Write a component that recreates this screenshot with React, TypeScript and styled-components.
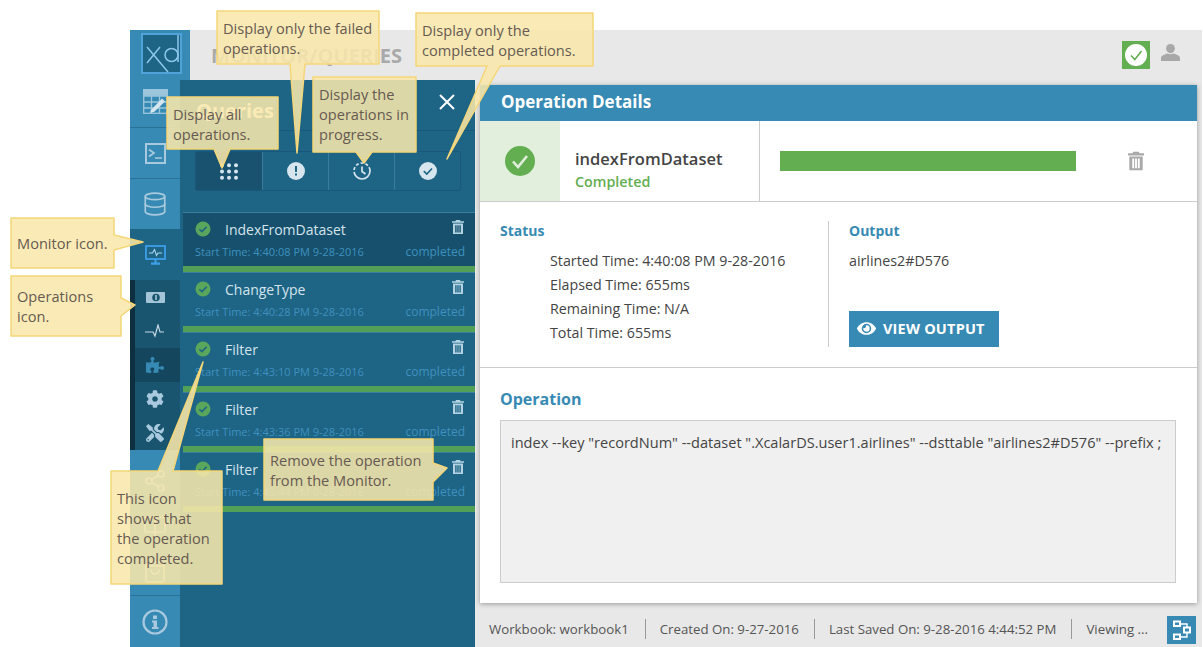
import React from "react";
import styled, { createGlobalStyle } from "styled-components";
import { Database, Share2, BookOpen, ShoppingBag } from "lucide-react";
import { FaPuzzlePiece, FaCog, FaTools, FaEye } from "react-icons/fa";

const GlobalStyle = createGlobalStyle`
  html, body {
    margin: 0;
    height: 647px;
    overflow: hidden;
    background: #fff;
    font-family: "Open Sans", "Noto Sans", sans-serif;
  }
  * { box-sizing: border-box; }
`;

const BLUE = "#378ab3";
const DEEP = "#1e6485";
const GREEN = "#64ae52";

const SPage = styled.div`
  position: relative;
  width: 1203px;
  height: 647px;
  padding: 30px 1px 0 130px;
  display: flex;
  flex-direction: column;
`;

const STopBar = styled.header`
  height: 50px;
  flex: none;
  display: flex;
  align-items: center;
  background: #e8e8e8;
  padding-right: 22px;
`;

const SLogoBlock = styled.div`
  width: 60px;
  height: 50px;
  flex: none;
  background: ${BLUE};
  padding: 3px 8px 6px 11px;
`;

const STitle = styled.h1`
  margin: 0 0 0 21px;
  font-size: 20px;
  font-weight: 700;
  color: #a9a9a9;
  flex: 1;
`;

const SHealth = styled.div`
  width: 28px;
  height: 28px;
  background: ${GREEN};
  display: flex;
  align-items: center;
  justify-content: center;
  margin-right: 11px;
`;

const SUser = styled.div`
  display: flex;
  margin-bottom: 5px;
`;

const SBody = styled.div`
  flex: 1;
  display: flex;
  min-height: 0;
`;

const SSidebar = styled.nav`
  width: 50px;
  flex: none;
  display: flex;
  flex-direction: column;
  background: ${BLUE};
`;

const SNavItem = styled.div<{ $h: number; $bg?: string; $line?: boolean; $strip?: boolean; $color?: string; $lift?: number }>`
  height: ${(p) => p.$h}px;
  flex: none;
  display: flex;
  align-items: center;
  justify-content: center;
  padding-bottom: ${(p) => p.$lift || 0}px;
  padding-right: ${(p) => (p.$strip ? 5 : 0)}px;
  background: ${(p) => p.$bg || "transparent"};
  border-bottom: ${(p) => (p.$line ? "1px solid #2a7198" : "0")};
  border-left: ${(p) => (p.$strip ? "5px solid #0e2f40" : "0")};
  color: ${(p) => p.$color || "#a9cade"};
  font-size: 18px;
`;

const SNavSpacer = styled.div`
  flex: 1;
  display: flex;
  flex-direction: column;
  align-items: center;
  justify-content: space-around;
  padding: 8px 0 0;
  color: #b3d3e3;
  border-bottom: 1px solid #2a7198;
`;

const SPanel = styled.section`
  width: 295px;
  flex: none;
  background: ${DEEP};
  display: flex;
  flex-direction: column;
  padding-left: 3px;
`;

const SPanelHead = styled.div`
  height: 51px;
  flex: none;
  display: flex;
  align-items: center;
  justify-content: space-between;
  padding: 0 20px 0 13px;
  border-bottom: 1px solid #19587a;
  margin-left: -3px;
  color: #fff;
`;

const SPanelTitle = styled.h2`
  margin: 10px 0 0 3px;
  font-size: 20px;
  font-weight: 700;
`;

const SClose = styled.div`
  display: flex;
  margin-bottom: 6px;
`;

const SFilterBar = styled.div`
  display: grid;
  grid-template-columns: repeat(4, 1fr);
  width: 266px;
  height: 40px;
  margin: 20px 0 21px 12px;
  border: 1px solid #19587a;
  border-radius: 3px;
  flex: none;
`;

const SFilterTab = styled.div<{ $active?: boolean }>`
  display: flex;
  align-items: center;
  justify-content: center;
  background: ${(p) => (p.$active ? "#18526f" : "transparent")};
  border-left: ${(p) => (p.$active ? "0" : "1px solid #3a7c9d")};
`;

const SRow = styled.div<{ $active?: boolean }>`
  height: 60px;
  flex: none;
  display: grid;
  grid-template-columns: 1fr auto;
  grid-template-rows: 32px 13px;
  align-items: center;
  padding: 0 10px 0 12px;
  background: ${(p) => (p.$active ? "#16506c" : "transparent")};
  border-top: 1px solid #3d7d9e;
  border-bottom: 6px solid #529f58;
`;

const SRowName = styled.div`
  display: flex;
  align-items: center;
  gap: 14px;
  font-size: 14px;
  color: #d4e4ec;
`;

const SRowTrash = styled.div`
  justify-self: end;
  display: flex;
  margin: 0 1px 4px 0;
`;

const SRowTime = styled.div`
  font-size: 11px;
  color: #3f90bf;
`;

const SRowState = styled.div`
  font-size: 12px;
  color: #3f90bf;
  justify-self: end;
`;

const SMain = styled.main`
  flex: 1;
  min-width: 0;
  background: #e8e8e8;
  display: flex;
  flex-direction: column;
  padding: 5px 5px 0 5px;
`;

const SCard = styled.div`
  height: 518px;
  flex: none;
  background: #fff;
  box-shadow: 0 1px 5px rgba(0, 0, 0, 0.35);
  display: flex;
  flex-direction: column;
`;

const SCardHead = styled.div`
  height: 36px;
  flex: none;
  background: ${BLUE};
  color: #fff;
  font-size: 17px;
  font-weight: 700;
  padding-left: 21px;
  line-height: 33px;
`;

const SSummary = styled.div`
  height: 81px;
  flex: none;
  display: flex;
  border-bottom: 1px solid #ccc;
`;

const SSummaryIcon = styled.div`
  width: 80px;
  background: #e1efdc;
  display: flex;
  align-items: center;
  justify-content: center;
`;

const SSummaryName = styled.div`
  width: 200px;
  padding: 26px 0 0 15px;
  border-right: 1px solid #ccc;
  white-space: nowrap;
`;

const SOpName = styled.div`
  font-size: 16.5px;
  font-weight: 600;
  color: #444;
  line-height: 24px;
`;

const SOpState = styled.div`
  font-size: 14.3px;
  font-weight: 600;
  color: ${GREEN};
  line-height: 22px;
`;

const SProgressWrap = styled.div`
  flex: 1;
  display: flex;
  align-items: center;
  padding-left: 20px;
`;

const SProgress = styled.div`
  width: 296px;
  height: 20px;
  background: ${GREEN};
  margin-right: 52px;
`;

const SInfo = styled.div`
  height: 166px;
  flex: none;
  display: flex;
  padding: 19px 0 20px 20px;
  border-bottom: 1px solid #ccc;
`;

const SStatus = styled.div`
  width: 329px;
  border-right: 1px solid #ccc;
`;

const SOutput = styled.div`
  padding-left: 20px;
`;

const SLabel = styled.h3`
  margin: 0;
  font-size: 14px;
  font-weight: 700;
  color: ${BLUE};
  line-height: 20px;
`;

const SStatusList = styled.div`
  margin: 8px 0 0 50px;
`;

const SLine = styled.div`
  font-size: 14.25px;
  color: #444;
  line-height: 24px;
`;

const SOutName = styled(SLine)`
  margin: 8px 0 38px;
`;

const SViewButton = styled.button`
  width: 150px;
  height: 36px;
  border: 0;
  background: ${BLUE};
  color: #fff;
  font: 700 14.5px "Open Sans", sans-serif;
  letter-spacing: 0.2px;
  display: flex;
  align-items: center;
  gap: 7px;
  padding: 0 0 2px 8px;
`;

const SOperation = styled.div`
  flex: 1;
  display: flex;
  flex-direction: column;
  padding: 20px 21px 20px 20px;
`;

const SOpTitle = styled.h3`
  margin: 0 0 9px;
  font-size: 16px;
  font-weight: 700;
  color: ${BLUE};
  line-height: 23px;
`;

const SCodeBox = styled.div`
  flex: 1;
  background: #f0f0f0;
  border: 1px solid #ccc;
  padding: 11px 10px;
  font-size: 14.55px;
  line-height: 20px;
  color: #444;
  white-space: nowrap;
`;

const SFooter = styled.footer`
  flex: 1;
  display: flex;
  align-items: center;
  padding: 0 1px 0 4px;
  font-size: 13.25px;
  color: #555;
`;

const SFootItem = styled.div`
  padding: 0 15px 0 14px;
  line-height: 20px;
  border-right: 1px solid #999;
  margin-top: 7px;
  white-space: nowrap;
  &:first-child {
    padding: 0 16px 0 5px;
  }
  &:nth-last-child(2) {
    border-right: 0;
    flex: 1;
  }
`;

const SFootButton = styled.div`
  width: 29px;
  height: 28px;
  flex: none;
  background: ${BLUE};
  display: flex;
  align-items: center;
  justify-content: center;
  margin-top: 9px;
`;

// yellow help balloons that sit over the screenshot
const SCallout = styled.div<{ $x: number; $y: number; $w: number; $h: number; $pad: number; $padX: number }>`
  position: absolute;
  left: ${(p) => p.$x}px;
  top: ${(p) => p.$y}px;
  width: ${(p) => p.$w}px;
  height: ${(p) => p.$h}px;
  padding: ${(p) => p.$pad}px 0 0 ${(p) => p.$padX}px;
  font-size: 14.6px;
  line-height: 20px;
  color: #665a52;
`;

const SCalloutShape = styled.svg`
  position: absolute;
  inset: 0;
  width: 100%;
  height: 100%;
  overflow: visible;
`;

const SCalloutText = styled.div`
  position: relative;
  white-space: pre-line;
`;

type CalloutProps = {
  x: number;
  y: number;
  w: number;
  h: number;
  side: "top" | "bottom" | "right";
  a: number;
  b: number;
  tip: [number, number];
  pad?: number;
  padX?: number;
  text: string;
};

const Callout = ({ x, y, w, h, side, a, b, tip, pad = 7, padX = 6, text }: CalloutProps) => {
  const tx = tip[0] - x;
  const ty = tip[1] - y;
  let d = "";
  if (side === "top") d = `M0 0H${a - x}L${tx} ${ty}L${b - x} 0H${w}V${h}H0Z`;
  if (side === "bottom") d = `M0 0H${w}V${h}H${b - x}L${tx} ${ty}L${a - x} ${h}H0Z`;
  if (side === "right") d = `M0 0H${w}V${a - y}L${tx} ${ty}L${w} ${b - y}V${h}H0Z`;
  return (
    <SCallout $x={x} $y={y} $w={w} $h={h} $pad={pad} $padX={padX}>
      <SCalloutShape>
        <path
          d={d}
          fill="#f9e8ab"
          fillOpacity={0.87}
          stroke="#f5d678"
          strokeWidth={1.5}
          strokeLinejoin="round"
        />
      </SCalloutShape>
      <SCalloutText>{text}</SCalloutText>
    </SCallout>
  );
};

const Logo = () => (
  <svg width="41" height="41" viewBox="0 0 41 41">
    <rect x="1" y="1" width="39" height="39" fill={DEEP} stroke="#4fa3d8" strokeWidth="2" />
    <g fill="none" stroke="#8cc8ec" strokeWidth="1.5">
      <path d="M6 14L27 39M19 14L6 30" />
      <circle cx="30.5" cy="22" r="6.5" />
      <path d="M37 2V29" />
    </g>
  </svg>
);

const TableIcon = () => (
  <svg width="25" height="25" viewBox="0 0 25 25" fill="none" stroke="#9cc6dc" strokeWidth="1.3">
    <rect x="0.7" y="0.7" width="23.6" height="23.6" />
    <path d="M1 7H24M1 13H24M1 19H24M8.5 7V24M16.5 7V24" />
    <rect x="0.7" y="0.7" width="23.6" height="5.5" fill="#9cc6dc" />
    <path d="M8 21L19 9.5L22 12.5L11 23L7 23.8Z" fill="#d5e6ef" stroke="none" />
  </svg>
);

const TerminalIcon = () => (
  <svg width="21" height="21" viewBox="0 0 21 21" fill="none" stroke="#a9cade" strokeWidth="2">
    <rect x="1" y="1" width="19" height="19" />
    <path d="M4 6.5L9 10L4 13.5M10 15H17" strokeWidth="1.7" />
  </svg>
);

const MonitorIcon = () => (
  <svg width="21" height="20" viewBox="0 0 21 20" fill="none" stroke="#3d9fe8" strokeWidth="1.8">
    <rect x="1" y="1" width="19" height="13" />
    <path d="M4 8H7.5L9.5 4.5L11.5 10.5L13 8H17" stroke="#a9d6f0" strokeWidth="1.1" />
    <path d="M10.5 14V18M6 18.7H15" strokeWidth="2.2" />
  </svg>
);

const OpsIcon = () => (
  <svg width="19" height="11" viewBox="0 0 19 11">
    <rect width="19" height="11" rx="1" fill="#a4c5d8" />
    <circle cx="10" cy="5.5" r="3.8" fill="#1a5570" />
    <rect x="9.2" y="3" width="1.6" height="5" fill="#a4c5d8" />
  </svg>
);

const PulseIcon = () => (
  <svg width="20" height="14" viewBox="0 0 20 14" fill="none" stroke="#c5d9e4" strokeWidth="1.2">
    <path d="M0 8H8L10 12L13 1L15 8H19" />
  </svg>
);

const InfoIcon = () => (
  <svg width="26" height="26" viewBox="0 0 26 26">
    <circle cx="13" cy="13" r="11.5" fill="none" stroke="#a9cade" strokeWidth="2.2" />
    <rect x="11" y="6.5" width="4" height="3.5" fill="#a9cade" />
    <path d="M10 11.5H15V18H16.5V20H10V18H11.5V13.5H10Z" fill="#a9cade" />
  </svg>
);

const TrashIcon = ({ color, w = 12, h = 14 }: { color: string; w?: number; h?: number }) => (
  <svg width={w} height={h} viewBox="0 0 12 14">
    <path d="M4 0H8L8.6 1.2H12V2.8H0V1.2H3.4Z" fill={color} />
    <path
      fillRule="evenodd"
      d="M1 3.6H11V14H1ZM3.2 5.2V12.4H4.6V5.2ZM5.3 5.2V12.4H6.7V5.2ZM7.4 5.2V12.4H8.8V5.2Z"
      fill={color}
    />
  </svg>
);

const RowCheck = () => (
  <svg width="16" height="16" viewBox="0 0 16 16">
    <circle cx="8" cy="8" r="7.5" fill="#59a65c" />
    <path d="M4.4 8.2L7 10.6L11.6 5.8" fill="none" stroke="#1e6485" strokeWidth="1.5" />
  </svg>
);

const DotsIcon = () => (
  <svg width="18" height="17" viewBox="0 0 18 17" fill="#d6e5ee">
    {[2.2, 8.5, 14.8].map((cy) =>
      [2, 9, 16].map((cx) => <circle key={`${cx}-${cy}`} cx={cx} cy={cy} r="2" />)
    )}
  </svg>
);

const AlertIcon = () => (
  <svg width="18" height="18" viewBox="0 0 18 18">
    <circle cx="9" cy="9" r="9" fill="#d6e5ee" />
    <rect x="8" y="4" width="2" height="6" fill={DEEP} />
    <rect x="8" y="11.5" width="2" height="2" fill={DEEP} />
  </svg>
);

const ClockIcon = () => (
  <svg width="18" height="18" viewBox="0 0 18 18" fill="none" stroke="#d6e5ee" strokeWidth="1.7">
    <circle cx="9" cy="9" r="8" strokeDasharray="24 2 3 2 3 2 3 2 3 2" />
    <path d="M9 4.5V9.5L12.5 12" />
  </svg>
);

const DoneIcon = () => (
  <svg width="18" height="18" viewBox="0 0 18 18">
    <circle cx="9" cy="9" r="9" fill="#d6e5ee" />
    <path d="M4.8 9.2L7.8 12L13 6.5" fill="none" stroke={DEEP} strokeWidth="1.6" />
  </svg>
);

const CloseIcon = () => (
  <svg width="16" height="16" viewBox="0 0 16 16" stroke="#fff" strokeWidth="2">
    <path d="M1 1L15 15M15 1L1 15" />
  </svg>
);

const BigCheck = () => (
  <svg width="30" height="30" viewBox="0 0 30 30">
    <circle cx="15" cy="15" r="15" fill={GREEN} />
    <path d="M8 15.5L13 21L22 10" fill="none" stroke="#e1efdc" strokeWidth="2.6" />
  </svg>
);

const HealthCheck = () => (
  <svg width="22" height="22" viewBox="0 0 22 22">
    <circle cx="11" cy="11" r="11" fill="#fff" />
    <path d="M6 11.5L9.8 15.5L16.5 7" fill="none" stroke={GREEN} strokeWidth="1.6" />
  </svg>
);

const UserIcon = () => (
  <svg width="19" height="17" viewBox="0 0 19 17" fill="#a8a8a8">
    <ellipse cx="9.5" cy="4.6" rx="4.4" ry="4.6" />
    <path d="M0 17V14C0 11.5 4 10.5 6.5 9.6C8 10.6 11 10.6 12.5 9.6C15 10.5 19 11.5 19 14V17Z" />
  </svg>
);

const FlowIcon = () => (
  <svg width="20" height="20" viewBox="0 0 20 20" fill="none" stroke="#fff" strokeWidth="2">
    <rect x="2" y="1.5" width="6" height="4.5" />
    <rect x="12" y="7.5" width="6" height="5" />
    <rect x="2" y="14.5" width="6" height="4.5" />
    <path d="M8 4H15V7M15 13V17H8" strokeWidth="1.4" />
  </svg>
);

const QUERIES = [
  { name: "IndexFromDataset", time: "4:40:08 PM 9-28-2016", active: true },
  { name: "ChangeType", time: "4:40:28 PM 9-28-2016" },
  { name: "Filter", time: "4:43:10 PM 9-28-2016" },
  { name: "Filter", time: "4:43:36 PM 9-28-2016" },
  { name: "Filter", time: "4:43:44 PM 9-28-2016" },
];

const STATUS = [
  "Started Time: 4:40:08 PM 9-28-2016",
  "Elapsed Time: 655ms",
  "Remaining Time: N/A",
  "Total Time: 655ms",
];

const App = () => (
  <SPage>
    <GlobalStyle />
    <STopBar>
      <SLogoBlock>
        <Logo />
      </SLogoBlock>
      <STitle>MONITOR/QUERIES</STitle>
      <SHealth>
        <HealthCheck />
      </SHealth>
      <SUser>
        <UserIcon />
      </SUser>
    </STopBar>
    <SBody>
      <SSidebar>
        <SNavItem $h={48} $line $lift={4}>
          <TableIcon />
        </SNavItem>
        <SNavItem $h={51} $line>
          <TerminalIcon />
        </SNavItem>
        <SNavItem $h={50}>
          <Database size={26} strokeWidth={1.5} />
        </SNavItem>
        <SNavItem $h={51} $bg={DEEP}>
          <MonitorIcon />
        </SNavItem>
        <SNavItem $h={34} $bg="#1a5570" $strip>
          <OpsIcon />
        </SNavItem>
        <SNavItem $h={34} $bg="#1a5570" $strip>
          <PulseIcon />
        </SNavItem>
        <SNavItem $h={34} $bg="#14465e" $strip $color="#378ab3">
          <FaPuzzlePiece />
        </SNavItem>
        <SNavItem $h={34} $bg="#1a5570" $strip>
          <FaCog />
        </SNavItem>
        <SNavItem $h={34} $bg="#1a5570" $strip>
          <FaTools />
        </SNavItem>
        <SNavSpacer>
          <Share2 size={24} strokeWidth={1.6} />
          <BookOpen size={24} strokeWidth={1.6} />
          <ShoppingBag size={24} strokeWidth={1.6} />
        </SNavSpacer>
        <SNavItem $h={51}>
          <InfoIcon />
        </SNavItem>
      </SSidebar>
      <SPanel>
        <SPanelHead>
          <SPanelTitle>Queries</SPanelTitle>
          <SClose>
            <CloseIcon />
          </SClose>
        </SPanelHead>
        <SFilterBar>
          <SFilterTab $active>
            <DotsIcon />
          </SFilterTab>
          <SFilterTab>
            <AlertIcon />
          </SFilterTab>
          <SFilterTab>
            <ClockIcon />
          </SFilterTab>
          <SFilterTab>
            <DoneIcon />
          </SFilterTab>
        </SFilterBar>
        {QUERIES.map((q) => (
          <SRow key={q.time} $active={q.active}>
            <SRowName>
              <RowCheck />
              {q.name}
            </SRowName>
            <SRowTrash>
              <TrashIcon color="#b3d3e3" />
            </SRowTrash>
            <SRowTime>Start Time: {q.time}</SRowTime>
            <SRowState>completed</SRowState>
          </SRow>
        ))}
      </SPanel>
      <SMain>
        <SCard>
          <SCardHead>Operation Details</SCardHead>
          <SSummary>
            <SSummaryIcon>
              <BigCheck />
            </SSummaryIcon>
            <SSummaryName>
              <SOpName>indexFromDataset</SOpName>
              <SOpState>Completed</SOpState>
            </SSummaryName>
            <SProgressWrap>
              <SProgress />
              <TrashIcon color="#a9a9a9" w={16} h={20} />
            </SProgressWrap>
          </SSummary>
          <SInfo>
            <SStatus>
              <SLabel>Status</SLabel>
              <SStatusList>
                {STATUS.map((s) => (
                  <SLine key={s}>{s}</SLine>
                ))}
              </SStatusList>
            </SStatus>
            <SOutput>
              <SLabel>Output</SLabel>
              <SOutName>airlines2#D576</SOutName>
              <SViewButton>
                <FaEye size={19} />
                VIEW OUTPUT
              </SViewButton>
            </SOutput>
          </SInfo>
          <SOperation>
            <SOpTitle>Operation</SOpTitle>
            <SCodeBox>
              index --key "recordNum" --dataset ".XcalarDS.user1.airlines" --dsttable "airlines2#D576" --prefix ;
            </SCodeBox>
          </SOperation>
        </SCard>
        <SFooter>
          <SFootItem>Workbook: workbook1</SFootItem>
          <SFootItem>Created On: 9-27-2016</SFootItem>
          <SFootItem>Last Saved On: 9-28-2016 4:44:52 PM</SFootItem>
          <SFootItem>Viewing ...</SFootItem>
          <SFootButton>
            <FlowIcon />
          </SFootButton>
        </SFooter>
      </SMain>
    </SBody>

    <Callout x={217} y={11} w={162} h={53} side="bottom" a={290} b={305} tip={[297, 153]} text={"Display only the failed\noperations."} />
    <Callout x={416} y={13} w={177} h={53} side="bottom" a={487} b={500} tip={[447, 159]} text={"Display only the\ncompleted operations."} />
    <Callout x={313} y={77} w={103} h={75} side="bottom" a={356} b={372} tip={[364, 163]} text={"Display the\noperations in\nprogress."} />
    <Callout x={167} y={97} w={111} h={52} side="bottom" a={214} b={230} tip={[222, 168]} text={"Display all\noperations."} />
    <Callout x={11} y={218} w={103} h={50} side="right" a={235} b={250} tip={[143, 242]} pad={15} text="Monitor icon." />
    <Callout x={11} y={276} w={110} h={60} side="right" a={298} b={316} tip={[135, 305]} pad={10} text={"Operations\nicon."} />
    <Callout x={111} y={471} w={111} h={113} side="top" a={158} b={173} tip={[203, 362]} pad={17} text={"This icon\nshows that\nthe operation\ncompleted."} />
    <Callout x={264} y={439} w={169} h={61} side="right" a={463} b={482} tip={[447, 468]} pad={11} text={"Remove the operation\nfrom the Monitor."} />
  </SPage>
);

export default App;
